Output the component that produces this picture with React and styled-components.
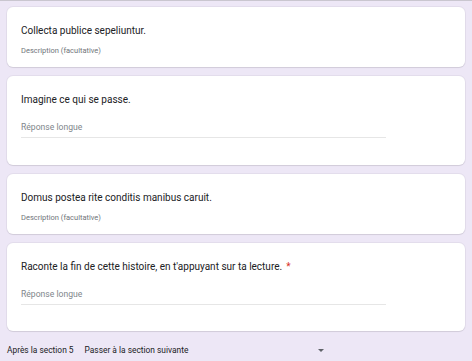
import React from "react";
import styled, { createGlobalStyle } from "styled-components";

const Global = createGlobalStyle`
  html, body { margin: 0; padding: 0; background: #ede7f6; }
  body { font-family: Roboto, "Noto Sans", Arial, sans-serif; color: #202124; }
`;

const Page = styled.div`
  width: 472px;
  height: 361px;
  box-sizing: border-box;
  padding: 6px 7px 0 7px;
  display: flex;
  flex-direction: column;
  gap: 9px;
  border-top: 1px solid #c9c6cf;
  overflow: hidden;
`;

const Card = styled.div`
  background: #fff;
  border-radius: 6px;
  box-shadow: 0 1px 1px rgba(0,0,0,0.08), 0 0 0 1px rgba(0,0,0,0.04);
  height: ${(p) => p.$h}px;
  box-sizing: border-box;
  padding: ${(p) => p.$pt}px 14px 0 14px;
  width: 458px;
  flex-shrink: 0;
`;

const Title = styled.div`
  font-size: 10px;
  line-height: 14px;
  color: #202124;
`;

const Desc = styled.div`
  font-size: 7.5px;
  line-height: 10px;
  color: #70757a;
  margin-top: 8px;
`;

const Star = styled.span`
  color: #d93025;
  margin-left: 4px;
`;

const Answer = styled.div`
  width: 365px;
  margin-top: ${(p) => p.$mt}px;
  border-bottom: 1px solid #e6e6e6;
  padding-bottom: 4px;
  font-size: 8.6px;
  line-height: 12px;
  color: #80868b;
`;

const Footer = styled.div`
  display: flex;
  align-items: center;
  font-size: 8.4px;
  color: #202124;
  margin-top: 3px;
  height: 14px;
`;

const Select = styled.div`
  display: flex;
  align-items: center;
  margin-left: 11px;
  width: 239px;
  justify-content: space-between;
`;

const Arrow = styled.span`
  width: 0;
  height: 0;
  border-left: 3px solid transparent;
  border-right: 3px solid transparent;
  border-top: 3px solid #5f6368;
`;

export default function App() {
  return (
    <>
      <Global />
      <Page>
        <Card $h={60} $pt={17}>
          <Title>Collecta publice sepeliuntur.</Title>
          <Desc>Description (facultative)</Desc>
        </Card>
        <Card $h={89} $pt={17}>
          <Title>Imagine ce qui se passe.</Title>
          <Answer $mt={14}>Réponse longue</Answer>
        </Card>
        <Card $h={60} $pt={17}>
          <Title>Domus postea rite conditis manibus caruit.</Title>
          <Desc>Description (facultative)</Desc>
        </Card>
        <Card $h={88} $pt={17}>
          <Title>
            Raconte la fin de cette histoire, en t'appuyant sur ta lecture.
            <Star>*</Star>
          </Title>
          <Answer $mt={14}>Réponse longue</Answer>
        </Card>
        <Footer>
          <span>Après la section 5</span>
          <Select>
            <span>Passer à la section suivante</span>
            <Arrow />
          </Select>
        </Footer>
      </Page>
    </>
  );
}
